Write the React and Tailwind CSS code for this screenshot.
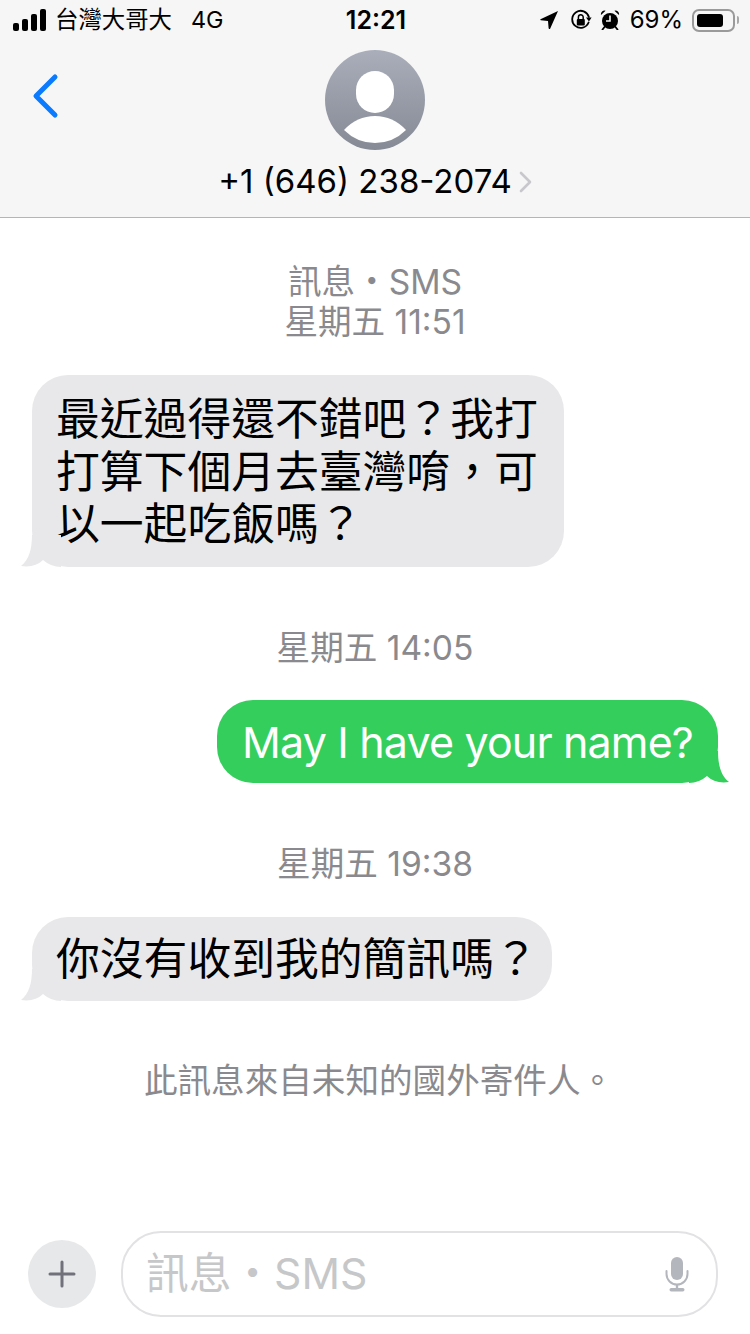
import React from 'react';

const fontStack = 'font-["Inter","Noto_Sans_CJK_TC",sans-serif]';

function SignalBars() {
  return (
    <svg width="34" height="22" viewBox="0 0 34 22" fill="#000">
      <rect x="0" y="14" width="6" height="8" rx="2" />
      <rect x="9" y="10" width="6" height="12" rx="2" />
      <rect x="18" y="5" width="6" height="17" rx="2" />
      <rect x="27" y="0" width="6" height="22" rx="2" />
    </svg>
  );
}

function LocationArrow() {
  return (
    <svg width="18" height="18" viewBox="0 0 18 18" fill="#000">
      <path d="M18 0 L10 18 Q9 18.5 8.6 17 L8 10 L0.8 9.3 Q-0.3 8.6 1 8 Z" />
    </svg>
  );
}

function RotationLock() {
  return (
    <svg width="22" height="22" viewBox="0 0 22 22" fill="none">
      <path d="M18.6 13.5 A8.5 8.5 0 1 1 18.9 8" stroke="#000" strokeWidth="1.8" strokeLinecap="round" />
      <path d="M16 8.6 L21.6 8.6 L19 12.6 Z" fill="#000" />
      <rect x="6.8" y="10" width="8" height="6.4" rx="1" fill="#000" />
      <path d="M8.4 10 V8.2 A2.4 2.4 0 0 1 13.2 8.2 V10" stroke="#000" strokeWidth="1.5" />
    </svg>
  );
}

function Alarm() {
  return (
    <svg width="20" height="20" viewBox="0 0 20 20" fill="none">
      <circle cx="10" cy="11" r="8" fill="#000" />
      <path d="M10 5.5 V11 H6" stroke="#f6f6f6" strokeWidth="1.6" />
      <path d="M1 5 A3.6 3.6 0 0 1 5.6 0.8 Z M19 5 A3.6 3.6 0 0 0 14.4 0.8 Z" fill="#000" />
      <path d="M4.5 17 L2.5 19.5 M15.5 17 L17.5 19.5" stroke="#000" strokeWidth="1.8" strokeLinecap="round" />
    </svg>
  );
}

function Battery() {
  return (
    <div className="flex items-center gap-[2px]">
      <div className="w-[43px] h-[23px] rounded-[7px] border-2 border-[#9a9a9a] p-[3px]">
        <div className="w-[26px] h-full rounded-[3px] bg-black" />
      </div>
      <div className="w-[2px] h-[8px] rounded-r-full bg-[#a8a8a8]" />
    </div>
  );
}

function StatusBar() {
  return (
    <div className="h-[40px] pl-[13px] pr-[11px] grid grid-cols-[1fr_auto_1fr] items-center text-black">
      <div className="flex items-center text-[23.4px] leading-none">
        <SignalBars />
        <span className="ml-[8px]">台灣大哥大</span>
        <span className="ml-[19px]">4G</span>
      </div>
      <div className="text-[25px] leading-none font-semibold">12:21</div>
      <div className="flex items-center justify-end text-[24px] leading-none">
        <LocationArrow />
        <span className="ml-[12px]"><RotationLock /></span>
        <span className="ml-[8px]"><Alarm /></span>
        <span className="ml-[10px]">69%</span>
        <span className="ml-[9px]"><Battery /></span>
      </div>
    </div>
  );
}

function Avatar() {
  return (
    <div className="relative w-[100px] h-[100px] rounded-full overflow-hidden bg-gradient-to-b from-[#a9aeba] to-[#858a95]">
      <div className="absolute left-[31px] top-[21px] w-[38px] h-[42px] rounded-full bg-white" />
      <svg className="absolute left-0 top-0" width="100" height="100" viewBox="0 0 100 100">
        <path d="M19 80 Q32 66 50 66 Q68 66 81 80 Q68 93 50 93 Q32 93 19 80 Z" fill="#fff" />
      </svg>
    </div>
  );
}

function Header() {
  return (
    <header className="relative h-[218px] bg-[#f6f6f6] border-b border-[#b5b5b5]">
      <StatusBar />
      <svg className="absolute left-[30px] top-[71px]" width="32" height="50" viewBox="0 0 32 50" fill="none">
        <path d="M25 6 L6 25 L25 44" stroke="#0a7aff" strokeWidth="5" strokeLinecap="round" strokeLinejoin="round" />
      </svg>
      <div className="flex flex-col items-center pt-[10px]">
        <Avatar />
        <div className="mt-[9px] flex items-center">
          <span className="text-[33px] leading-[44px] text-black">+1 (646) 238-2074</span>
          <svg className="ml-[7px] mt-[2px]" width="13" height="22" viewBox="0 0 13 22" fill="none">
            <path d="M2 2 L11 11 L2 20" stroke="#c7c7cc" strokeWidth="2.6" strokeLinecap="round" strokeLinejoin="round" />
          </svg>
        </div>
      </div>
    </header>
  );
}

function Stamp({ children, className = '' }) {
  return <div className={`text-center text-[33.6px] leading-[40px] text-[#8a8a8e] ${className}`}>{children}</div>;
}

function IncomingBubble({ children, className = '' }) {
  return (
    <div className={`relative self-start ml-[32px] pl-[24px] rounded-[36px] bg-[#e8e8ea] text-[43.8px] leading-[52.5px] text-black ${className}`}>
      {children}
      <svg className="absolute left-[-11px] bottom-0" width="40" height="32" viewBox="0 0 40 32" fill="#e8e8ea">
        <path d="M11 0 C11 14 8 25 0 31 Q14 33 22 25 Q30 32 40 32 L40 0 Z" />
      </svg>
    </div>
  );
}

function OutgoingBubble({ children, className = '' }) {
  return (
    <div className={`relative self-end mr-[32px] px-[25px] pt-[16px] pb-[14px] rounded-[36px] bg-[#34ce5c] text-[43px] leading-[53px] tracking-[-0.85px] text-white ${className}`}>
      {children}
      <svg className="absolute right-[-11px] bottom-0" width="40" height="32" viewBox="0 0 40 32" fill="#34ce5c">
        <path d="M29 0 C29 14 32 25 40 31 Q26 33 18 25 Q10 32 0 32 L0 0 Z" />
      </svg>
    </div>
  );
}

function InputBar() {
  return (
    <div className="mt-auto mb-[17px] pl-[28px] pr-[32px] flex items-center">
      <div className="w-[68px] h-[68px] rounded-full bg-[#e7e8ea] flex items-center justify-center">
        <svg width="28" height="28" viewBox="0 0 28 28" fill="none">
          <path d="M14 2 V26 M2 14 H26" stroke="#70717a" strokeWidth="3" strokeLinecap="round" />
        </svg>
      </div>
      <div className="ml-[25px] flex-1 h-[86px] rounded-[40px] border-2 border-[#e2e2e4] flex items-center justify-between pl-[23px] pr-[27px]">
        <span className="text-[42.7px] leading-none text-[#c6c7c9]">訊息・SMS</span>
        <svg width="24" height="36" viewBox="0 0 24 36" fill="none">
          <rect x="6" y="1" width="12" height="23" rx="6" fill="#b3b6bd" />
          <path d="M1.5 15 V18 A10.5 10.5 0 0 0 22.5 18 V15" stroke="#b3b6bd" strokeWidth="2" strokeLinecap="round" />
          <path d="M12 28 V33" stroke="#b3b6bd" strokeWidth="2.4" />
          <rect x="4.5" y="32" width="15" height="3.4" rx="1.7" fill="#b3b6bd" />
        </svg>
      </div>
    </div>
  );
}

export default function App() {
  return (
    <div className={`w-[750px] h-[1334px] bg-white flex flex-col overflow-hidden ${fontStack}`}>
      <Header />
      <main className="flex-1 flex flex-col">
        <Stamp className="mt-[44px]">訊息・SMS</Stamp>
        <Stamp>星期五 11:51</Stamp>
        <IncomingBubble className="mt-[33px] w-[532px] pr-[25px] pt-[19px] pb-[15px]">
          最近過得還不錯吧？我打
          打算下個月去臺灣唷，可
          以一起吃飯嗎？
        </IncomingBubble>
        <Stamp className="mt-[61px]">星期五 14:05</Stamp>
        <OutgoingBubble className="mt-[32px]">May I have your name?</OutgoingBubble>
        <Stamp className="mt-[61px]">星期五 19:38</Stamp>
        <IncomingBubble className="mt-[33px] pr-[14px] pt-[17px] pb-[15px]">你沒有收到我的簡訊嗎？</IncomingBubble>
        <Stamp className="mt-[60px] pl-[8px]">此訊息來自未知的國外寄件人。</Stamp>
        <InputBar />
      </main>
    </div>
  );
}
